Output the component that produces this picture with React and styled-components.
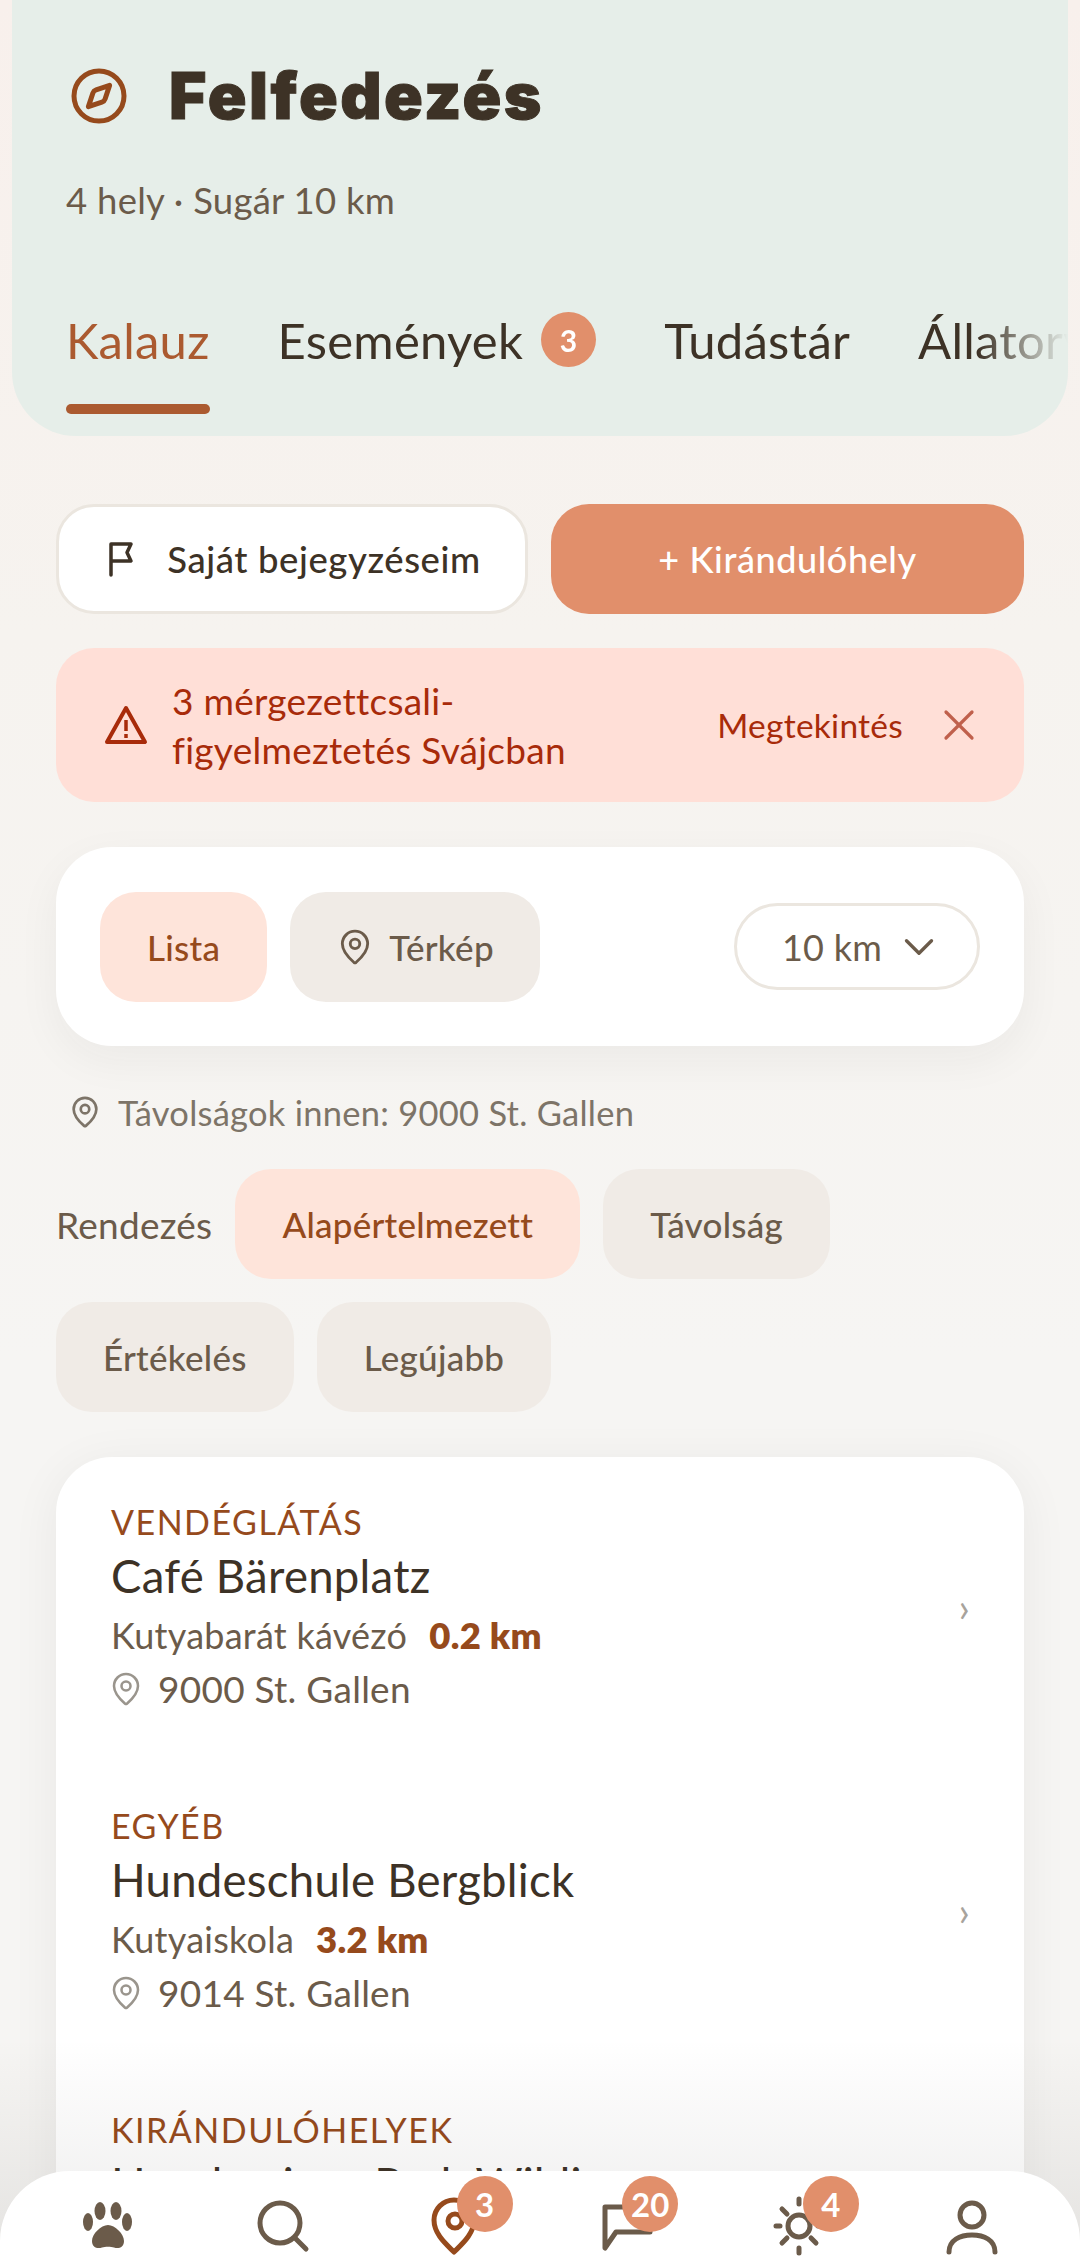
import React from 'react';
import styled, { createGlobalStyle } from 'styled-components';
import { Compass, MapPin, ChevronDown, X } from 'lucide-react';

const GlobalStyle = createGlobalStyle`
  html, body {
    margin: 0;
    padding: 0;
    background: #f6f5f3;
  }
  * {
    box-sizing: border-box;
  }
`

const places = [
  { cat: 'VENDÉGLÁTÁS', name: 'Café Bärenplatz', desc: 'Kutyabarát kávézó', dist: '0.2 km', addr: '9000 St. Gallen' },
  { cat: 'EGYÉB', name: 'Hundeschule Bergblick', desc: 'Kutyaiskola', dist: '3.2 km', addr: '9014 St. Gallen' },
  { cat: 'KIRÁNDULÓHELYEK', name: 'Hundewiese Park Wildi', desc: 'Kutyafuttató', dist: '4.1 km', addr: '9000 St. Gallen' },
];

const PawIcon = () => (
  <svg width="52" height="52" viewBox="0 0 52 52" fill="#6b5b4a">
    <ellipse cx="6" cy="20" rx="5" ry="9" />
    <ellipse cx="18" cy="9" rx="5.5" ry="9" />
    <ellipse cx="34" cy="9" rx="5.5" ry="9" />
    <ellipse cx="45" cy="20" rx="5" ry="9" />
    <path d="M26 23C33 23 42 32 42 39C42 46 36 47 32 45.5C29 44.5 23 44.5 20 45.5C16 47 10 46 10 39C10 32 19 23 26 23Z" />
  </svg>
);

const SearchIcon = () => (
  <svg width="52" height="52" viewBox="0 0 52 52" fill="none" stroke="#6b5b4a" strokeWidth="5" strokeLinecap="round">
    <circle cx="25" cy="21" r="20" />
    <path d="M40 36L51 47" />
  </svg>
);

const PinIcon = () => (
  <svg width="52" height="52" viewBox="0 0 52 52" fill="none" stroke="#964a1c" strokeWidth="5" strokeLinejoin="round">
    <path d="M26 50C18 42 6 32 6 18A20 20 0 0 1 46 18C46 32 34 42 26 50Z" />
    <circle cx="27" cy="19" r="7" />
  </svg>
);

const ChatIcon = () => (
  <svg width="52" height="52" viewBox="0 0 52 52" fill="none" stroke="#6b5b4a" strokeWidth="5" strokeLinejoin="round" strokeLinecap="round">
    <path d="M5 5H50V30H16L5 46Z" />
  </svg>
);

const SunIcon = () => (
  <svg width="52" height="52" viewBox="0 0 52 52" fill="none" stroke="#6b5b4a" strokeWidth="5" strokeLinecap="round">
    <circle cx="26" cy="24" r="11" />
    <path d="M26 -3V2M26 46V51M3 24H7M45 24H49M9 7L14 12M38 36L43 41M9 41L14 36" />
  </svg>
);

const UserIcon = () => (
  <svg width="52" height="52" viewBox="0 0 52 52" fill="none" stroke="#6b5b4a" strokeWidth="5" strokeLinecap="round">
    <circle cx="26" cy="13" r="12" />
    <path d="M3 50C3 38 14 33 26 33C38 33 49 38 49 50" />
  </svg>
);

const FlagIcon = () => (
  <svg width="26" height="36" viewBox="0 0 26 36" fill="none" stroke="#3d3226" strokeWidth="3.5" strokeLinecap="round" strokeLinejoin="round">
    <path d="M3 34V3H23L19 11.5L23 20H3" />
  </svg>
);

const WarnIcon = () => (
  <svg width="44" height="40" viewBox="0 0 44 40" fill="none" stroke="#a82b0a" strokeWidth="4" strokeLinejoin="round">
    <path d="M22 3L41 37H3Z" />
    <path d="M22 15V26M22 29V33" strokeWidth="3.5" />
  </svg>
);

export default function App() {
  return (
    <Page>
      <GlobalStyle />
      <Header>
        <TitleRow>
          <Compass size={60} color="#964a1c" strokeWidth={2} />
          <Title>Felfedezés</Title>
        </TitleRow>
        <Subtitle>4 hely · Sugár 10 km</Subtitle>
        <Tabs>
          <Tab $active>Kalauz</Tab>
          <Tab>
            Események
            <TabBadge>3</TabBadge>
          </Tab>
          <Tab>Tudástár</Tab>
          <Tab>Állatorvos</Tab>
        </Tabs>
      </Header>

      <Content>
        <ActionRow>
          <GhostButton>
            <FlagIcon />
            Saját bejegyzéseim
          </GhostButton>
          <PrimaryButton>+ Kirándulóhely</PrimaryButton>
        </ActionRow>

        <Alert>
          <WarnIcon />
          <AlertText>3 mérgezettcsali-<br />figyelmeztetés Svájcban</AlertText>
          <AlertLink>Megtekintés</AlertLink>
          <CloseIcon size={52} color="#c0604c" strokeWidth={1.5} />
        </Alert>

        <ViewCard>
          <Chip $active>Lista</Chip>
          <Chip $icon>
            <MapPin size={38} strokeWidth={1.8} />
            Térkép
          </Chip>
          <RadiusSelect>
            10 km
            <SelectChevron size={50} strokeWidth={1.6} />
          </RadiusSelect>
        </ViewCard>

        <DistanceNote>
          <MapPin size={34} strokeWidth={1.9} />
          Távolságok innen: 9000 St. Gallen
        </DistanceNote>

        <SortRow>
          <SortLabel>Rendezés</SortLabel>
          <Chip $active>Alapértelmezett</Chip>
          <Chip>Távolság</Chip>
          <Chip>Értékelés</Chip>
          <Chip>Legújabb</Chip>
        </SortRow>

        <ListCard>
          {places.map((p) => (
            <Place key={p.name}>
              <PlaceBody>
                <Category>{p.cat}</Category>
                <PlaceName>{p.name}</PlaceName>
                <PlaceDesc>
                  {p.desc}
                  <Distance>{p.dist}</Distance>
                </PlaceDesc>
                <PlaceAddr>
                  <MapPin size={36} color="#9a958d" strokeWidth={1.7} />
                  {p.addr}
                </PlaceAddr>
              </PlaceBody>
              <Chevron>›</Chevron>
            </Place>
          ))}
        </ListCard>
      </Content>

      <BottomFade />
      <Nav>
        <NavItem><NavIcon><PawIcon /></NavIcon></NavItem>
        <NavItem><NavIcon><SearchIcon /></NavIcon></NavItem>
        <NavItem><NavIcon><PinIcon /><NavBadge $left={29}>3</NavBadge></NavIcon></NavItem>
        <NavItem><NavIcon><ChatIcon /><NavBadge $left={22}>20</NavBadge></NavIcon></NavItem>
        <NavItem><NavIcon><SunIcon /><NavBadge $left={30}>4</NavBadge></NavIcon></NavItem>
        <NavItem><NavIcon><UserIcon /></NavIcon></NavItem>
      </Nav>
    </Page>
  );
}

const Page = styled.div`
  position: relative;
  width: 1080px;
  height: 2268px;
  overflow: hidden;
  background: linear-gradient(180deg, #f8f0ec 0%, #f6f3ef 28%, #f6f5f3 60%);
  font-family: "Lato", "Liberation Sans", sans-serif;
  letter-spacing: 0.016em;
  color: #3d3226;
`

const Header = styled.header`
  margin: 0 12px;
  height: 436px;
  padding: 64px 0 0 54px;
  background: #e6eee9;
  border-radius: 0 0 64px 64px;
  overflow: hidden;
`

const TitleRow = styled.div`
  display: flex;
  align-items: center;
  gap: 40px;
  padding-left: 3px;
  height: 64px;
`

const Title = styled.h1`
  margin: 0;
  font-family: "Inter", "Lato", sans-serif;
  font-size: 64px;
  line-height: 64px;
  font-weight: 900;
  letter-spacing: 2.5px;
  -webkit-text-stroke: 1px #3d3226;
  color: #3d3226;
`

const Subtitle = styled.p`
  margin: 50px 0 0;
  font-size: 36.5px;
  line-height: 44px;
  color: #6b5b4a;
`

const Tabs = styled.nav`
  display: flex;
  gap: 68px;
  margin-top: 90px;
  height: 102px;
  -webkit-mask-image: linear-gradient(90deg, #000 91%, transparent 100%);
  mask-image: linear-gradient(90deg, #000 91%, transparent 100%);
`

const Tab = styled.div`
  position: relative;
  display: flex;
  align-items: flex-start;
  flex: none;
  gap: 18px;
  height: 100%;
  font-size: 49px;
  line-height: 56px;
  color: ${(p) => (p.$active ? '#ab5a30' : '#3d3226')};
  &::after {
    content: '';
    display: ${(p) => (p.$active ? 'block' : 'none')};
    position: absolute;
    left: 0;
    right: 0;
    bottom: 0;
    height: 10px;
    border-radius: 5px;
    background: #ab5a30;
  }
`

const TabBadge = styled.span`
  display: flex;
  align-items: center;
  justify-content: center;
  width: 55px;
  height: 55px;
  border-radius: 50%;
  background: #e18f6b;
  color: #fff;
  font-size: 30px;
  font-weight: 700;
`

const Content = styled.main`
  padding: 68px 56px 0;
`

const ActionRow = styled.div`
  display: grid;
  grid-template-columns: 472px 473px;
  gap: 23px;
`

const GhostButton = styled.button`
  display: flex;
  align-items: center;
  justify-content: center;
  gap: 33px;
  height: 110px;
  padding: 0 0 0 5px;
  background: #fff;
  border: 3px solid #ebe6df;
  border-radius: 38px;
  font: 500 36.5px "Lato", sans-serif;
  letter-spacing: 0.016em;
  color: #3d3226;
`

const PrimaryButton = styled.button`
  height: 110px;
  background: #e18f6b;
  border: none;
  border-radius: 38px;
  font: 500 36px "Lato", sans-serif;
  letter-spacing: 0.016em;
  color: #fff;
`

const Alert = styled.div`
  display: flex;
  align-items: center;
  gap: 24px;
  height: 154px;
  margin-top: 34px;
  padding: 0 52px 0 48px;
  background: #ffdfd7;
  border-radius: 38px;
  color: #a82b0a;
`

const AlertText = styled.div`
  flex: 1;
  font-size: 37px;
  line-height: 49px;
`

const AlertLink = styled.span`
  margin-right: 19px;
  font-size: 33.5px;
`

const CloseIcon = styled(X)`
  flex: none;
  margin: 0 -13px;
`

const ViewCard = styled.div`
  display: flex;
  align-items: center;
  gap: 23px;
  height: 199px;
  margin-top: 45px;
  padding: 0 44px;
  background: #fff;
  border-radius: 56px;
  box-shadow: 0 14px 44px rgba(40, 35, 30, 0.05);
`

const Chip = styled.div`
  display: flex;
  align-items: center;
  gap: 15px;
  height: 110px;
  padding: 0 ${(p) => (p.$icon ? '46px' : '47px')};
  border-radius: 36px;
  background: ${(p) => (p.$active ? '#fee4da' : '#f0ebe6')};
  color: ${(p) => (p.$active ? '#964a1c' : '#6b5b4a')};
  font-size: 35px;
  font-weight: 500;
  white-space: nowrap;
`

const RadiusSelect = styled.div`
  display: flex;
  align-items: center;
  justify-content: center;
  gap: 24px;
  width: 246px;
  height: 87px;
  margin-left: auto;
  background: #fff;
  border: 3px solid #ebe6df;
  border-radius: 44px;
  color: #6b5b4a;
  font-size: 36px;
`

const SelectChevron = styled(ChevronDown)`
  flex: none;
  margin: 0 -12px;
`

const DistanceNote = styled.div`
  display: flex;
  align-items: center;
  gap: 16px;
  height: 44px;
  margin-top: 44px;
  padding-left: 12px;
  color: #7d7468;
  font-size: 34.5px;
`

const SortRow = styled.div`
  display: flex;
  flex-wrap: wrap;
  align-items: center;
  gap: 23px;
  margin-top: 35px;
`

const SortLabel = styled.span`
  font-size: 37px;
  color: #6b5b4a;
`

const ListCard = styled.section`
  margin-top: 45px;
  padding: 43px 55px 0;
  background: #fff;
  border-radius: 56px;
  box-shadow: 0 8px 50px rgba(40, 35, 30, 0.06);
`

const Place = styled.article`
  display: flex;
  align-items: center;
  justify-content: space-between;
  margin-bottom: 90px;
`

const PlaceBody = styled.div`
  display: flex;
  flex-direction: column;
`

const Category = styled.div`
  font-size: 34px;
  line-height: 44px;
  letter-spacing: 1.5px;
  color: #964a1c;
`

const PlaceName = styled.div`
  margin-top: 4px;
  font-size: 45.5px;
  line-height: 56px;
  color: #3d3226;
`

const PlaceDesc = styled.div`
  margin-top: 6px;
  font-size: 36px;
  line-height: 50px;
  color: #6b5b4a;
`

const Distance = styled.strong`
  margin-left: 22px;
  font-size: 36.5px;
  font-weight: 800;
  color: #964a1c;
`

const PlaceAddr = styled.div`
  display: flex;
  align-items: center;
  gap: 14px;
  margin-top: 4px;
  font-size: 37px;
  line-height: 50px;
  color: #6b5b4a;
  svg {
    margin-left: -3px;
  }
`

const Chevron = styled.span`
  margin-right: -1px;
  font-size: 40px;
  color: #a8a39c;
`

const BottomFade = styled.div`
  position: absolute;
  left: 0;
  right: 0;
  bottom: 0;
  height: 230px;
  background: linear-gradient(180deg, rgba(40, 35, 30, 0) 0%, rgba(40, 35, 30, 0.09) 100%);
  pointer-events: none;
`

const Nav = styled.nav`
  position: absolute;
  left: 0;
  right: 0;
  bottom: 0;
  display: grid;
  grid-template-columns: repeat(6, 1fr);
  height: 97px;
  padding: 31px 22px 0;
  background: #fff;
  border-radius: 70px 70px 0 0;
`

const NavItem = styled.div`
  display: flex;
  justify-content: center;
`

const NavIcon = styled.div`
  position: relative;
  width: 52px;
  height: 52px;
  svg {
    display: block;
    overflow: visible;
  }
`

const NavBadge = styled.span`
  position: absolute;
  left: ${(p) => p.$left}px;
  top: -26px;
  display: flex;
  align-items: center;
  justify-content: center;
  min-width: 56px;
  height: 56px;
  padding: 0 8px;
  border-radius: 28px;
  background: #e18f6b;
  color: #fff;
  font-size: 33px;
  font-weight: 700;
`
